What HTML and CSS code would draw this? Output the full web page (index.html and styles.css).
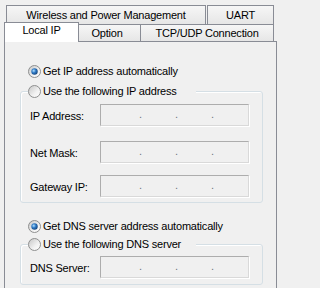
FILE: index.html
```html
<!DOCTYPE html>
<html>
<head>
<meta charset="utf-8">
<link rel="stylesheet" href="styles.css">
</head>
<body>
<div class="tabs-back">
  <div class="tab tab-wireless">Wireless and Power Management</div>
  <div class="tab tab-uart">UART</div>
</div>
<div class="tabs-front">
  <div class="tab tab-selected">Local IP</div>
  <div class="tab tab-option">Option</div>
  <div class="tab tab-tcp">TCP/UDP Connection</div>
</div>
<div class="panel">
  <div class="opt">
    <svg class="radio" width="13" height="13" viewBox="0 0 13 13">
      <defs>
        <linearGradient id="rbg" x1="0" y1="0" x2="1" y2="1">
          <stop offset="0" stop-color="#c4c4c4"/>
          <stop offset="0.6" stop-color="#f2f2f2"/>
          <stop offset="1" stop-color="#ffffff"/>
        </linearGradient>
        <radialGradient id="rdot" cx="0.38" cy="0.38" r="0.7">
          <stop offset="0" stop-color="#b4e2ff"/>
          <stop offset="0.45" stop-color="#2f7ac6"/>
          <stop offset="1" stop-color="#123e72"/>
        </radialGradient>
      </defs>
      <circle cx="6.5" cy="6.5" r="6" fill="url(#rbg)" stroke="#8e8f8f"/>
      <circle cx="6.5" cy="6.5" r="3.2" fill="url(#rdot)"/>
    </svg>
    <span>Get IP address automatically</span>
  </div>
  <fieldset class="group group-ip">
    <legend class="legend">
      <div class="opt-legend">
        <svg class="radio" width="13" height="13" viewBox="0 0 13 13">
          <circle cx="6.5" cy="6.5" r="6" fill="url(#rbg)" stroke="#8e8f8f"/>
        </svg>
        <span>Use the following IP address</span>
      </div>
    </legend>
    <div class="field">
      <span class="label">IP Address:</span>
      <div class="ip"><span class="dot">.</span><span class="dot">.</span><span class="dot">.</span></div>
    </div>
    <div class="field field-mask">
      <span class="label">Net Mask:</span>
      <div class="ip"><span class="dot">.</span><span class="dot">.</span><span class="dot">.</span></div>
    </div>
    <div class="field field-gw">
      <span class="label">Gateway IP:</span>
      <div class="ip"><span class="dot">.</span><span class="dot">.</span><span class="dot">.</span></div>
    </div>
  </fieldset>
  <div class="opt opt-dns">
    <svg class="radio" width="13" height="13" viewBox="0 0 13 13">
      <circle cx="6.5" cy="6.5" r="6" fill="url(#rbg)" stroke="#8e8f8f"/>
      <circle cx="6.5" cy="6.5" r="3.2" fill="url(#rdot)"/>
    </svg>
    <span>Get DNS server address automatically</span>
  </div>
  <fieldset class="group group-dns">
    <legend class="legend">
      <div class="opt-legend">
        <svg class="radio" width="13" height="13" viewBox="0 0 13 13">
          <circle cx="6.5" cy="6.5" r="6" fill="url(#rbg)" stroke="#8e8f8f"/>
        </svg>
        <span>Use the following DNS server</span>
      </div>
    </legend>
    <div class="field">
      <span class="label">DNS Server:</span>
      <div class="ip"><span class="dot">.</span><span class="dot">.</span><span class="dot">.</span></div>
    </div>
  </fieldset>
</div>
</body>
</html>
```
FILE: styles.css
```css
html, body {
  margin: 0;
  padding: 0;
}
body {
  width: 282px;
  height: 288px;
  overflow: hidden;
  background: #f0f0f0;
  color: #000;
  font-family: "Liberation Sans", Arial, sans-serif;
  font-size: 11px;
  line-height: 13px;
  letter-spacing: -0.2px;
}

/* tabs */
.tabs-back {
  display: flex;
  padding: 5px 0 0 6px;
}
.tabs-front {
  display: flex;
  height: 17px;
  padding-left: 4px;
}
.tab {
  box-sizing: border-box;
  border: 1px solid #898c95;
  border-bottom: 0;
  background: linear-gradient(#f6f6f6, #e6e6e6);
  text-align: center;
  white-space: nowrap;
}
.tabs-back .tab {
  height: 19px;
  line-height: 18px;
}
.tab-wireless {
  width: 200px;
}
.tab-uart {
  width: 67px;
  margin-left: 1px;
}
.tabs-front .tab {
  height: 17px;
  line-height: 16px;
}
.tabs-front .tab-selected {
  position: relative;
  z-index: 1;
  width: 75px;
  height: 20px;
  margin-top: -2px;
  line-height: 14px;
  background: #ffffff;
}
.tab-option {
  width: 64px;
  margin-left: -2px;
  padding-right: 4px;
}
.tab-tcp {
  width: 134px;
  margin-left: -1px;
}

/* panel */
.panel {
  box-sizing: border-box;
  width: 273px;
  height: 247px;
  margin-left: 4px;
  border: 1px solid #898c95;
  border-bottom: 0;
  padding: 21px 13px 0 15px;
  background: #f0f0f0;
}
.radio {
  display: block;
  flex: none;
}
.opt {
  display: flex;
  align-items: center;
  gap: 2px;
  height: 16px;
  margin-left: 8px;
}
.opt-dns {
  margin-top: 15px;
}
.group {
  margin: 4px 0 0;
  padding: 5px 0 5px 7px;
  min-width: 0;
  border: 1px solid #d5dfe5;
  border-radius: 3px;
  box-shadow: inset 1px 1px 0 #ffffff;
}
.group-dns {
  margin-top: 2px;
  padding-top: 4px;
  padding-bottom: 6px;
}
.legend {
  padding: 0;
  width: 168px;
  background: #f0f0f0;
}
.opt-legend {
  display: flex;
  align-items: center;
  gap: 2px;
  height: 16px;
}
.field {
  display: flex;
  align-items: center;
  height: 22px;
  padding-left: 2px;
}
.field-mask {
  margin-top: 15px;
}
.field-gw {
  margin-top: 12px;
}
.label {
  width: 70px;
  padding-top: 2px;
  flex: none;
}
.ip {
  box-sizing: border-box;
  display: flex;
  gap: 33px;
  width: 149px;
  height: 22px;
  padding-left: 38px;
  border: 1px solid;
  border-color: #adadad #d9d9d9 #d9d9d9 #adadad;
  box-shadow: 1px 1px 0 #ffffff;
  line-height: 18px;
  color: #6f7780;
}
.dot {
  width: 3px;
}
```
